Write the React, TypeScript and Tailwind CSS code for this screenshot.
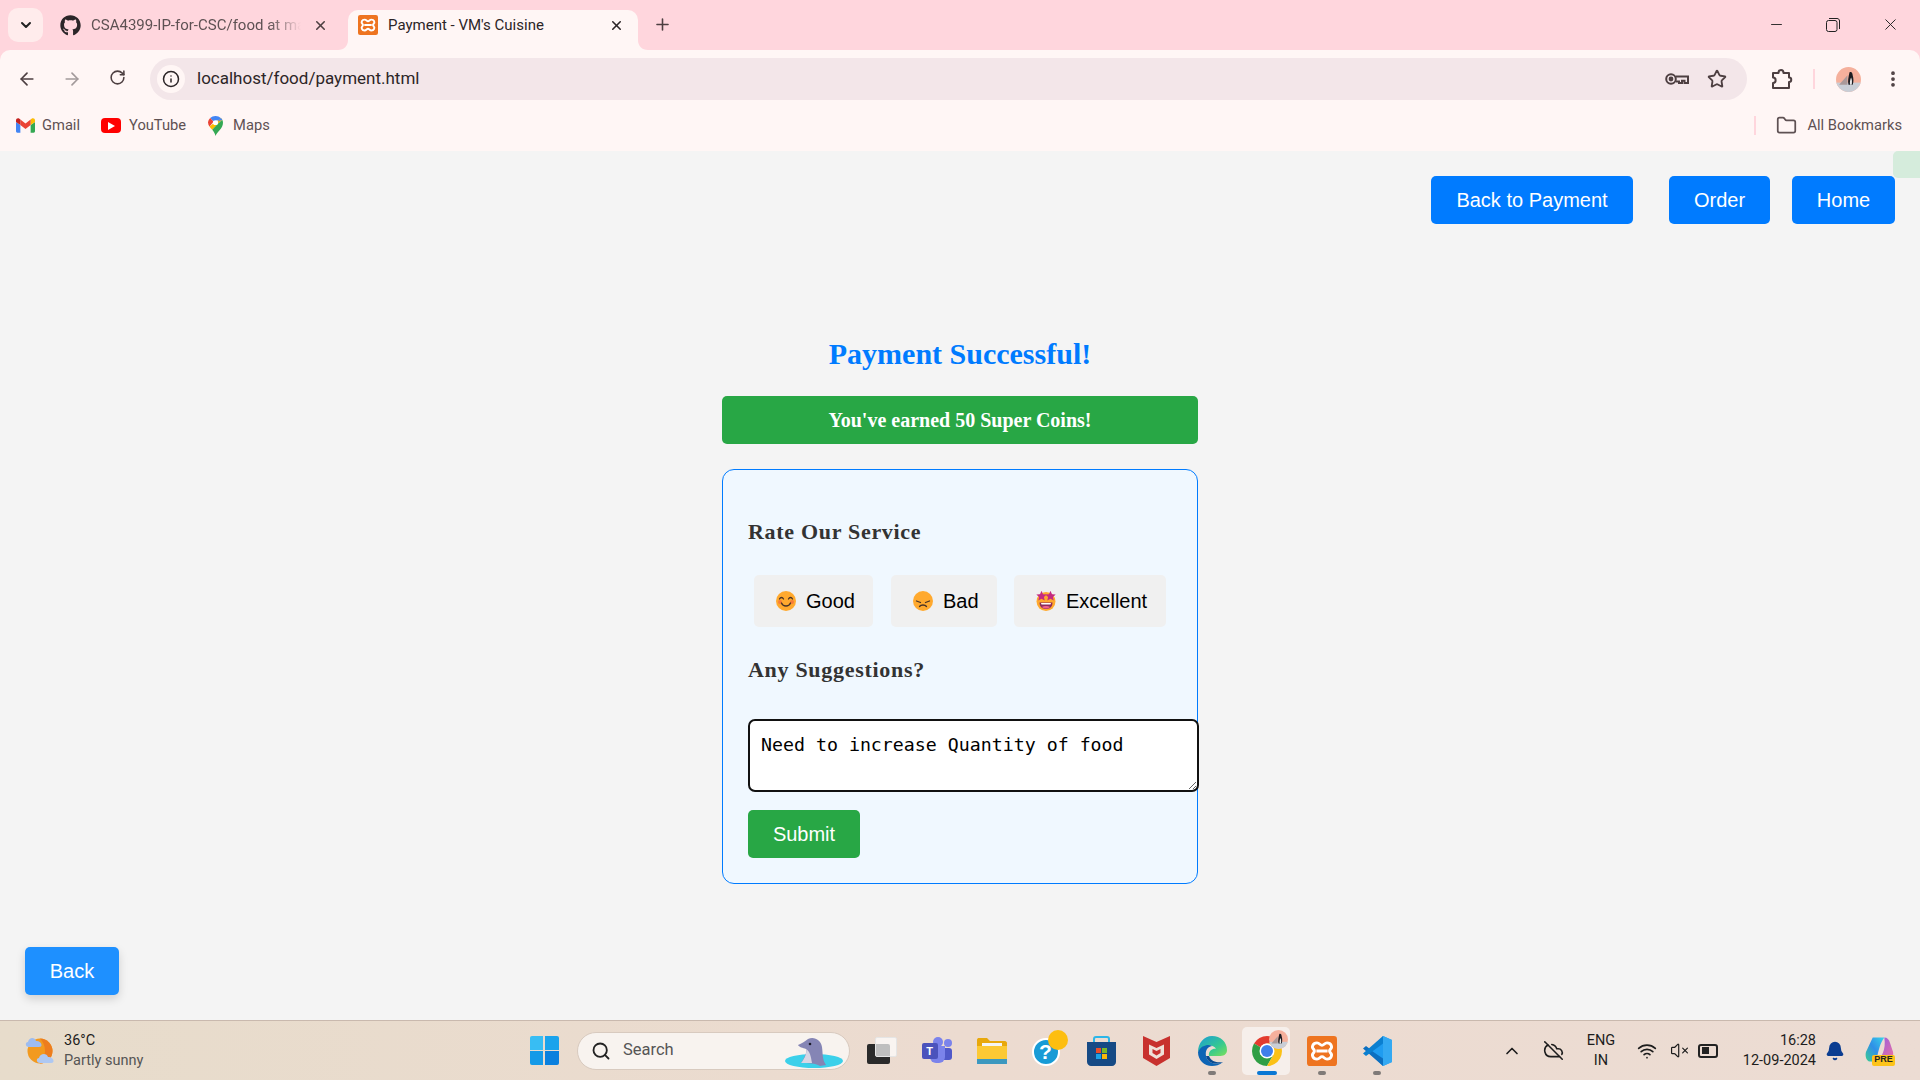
import {
  ArrowLeft,
  ArrowRight,
  Bell,
  ChevronDown,
  ChevronUp,
  CloudOff,
  Folder,
  Info,
  Minus,
  MoreVertical,
  Plus,
  RotateCw,
  Search,
  Star,
  VolumeX,
  Wifi,
  X,
} from "lucide-react";
import { FaGithub } from "react-icons/fa";
import type { ReactNode } from "react";

function Xampp({ size }: { size: number }) {
  return (
    <svg width={size} height={size} viewBox="0 0 24 24">
      <rect width="24" height="24" rx="2.500" fill="#ee7420" />
      <path
        d="M8 5.500C10 5.500 10.500 7.500 12 7.500S14 5.500 16 5.500C19.500 5.500 20.500 9 18.800 10.500 17.800 11.500 17.800 12.500 18.800 13.500 20.500 15 19.500 18.500 16 18.500 14 18.500 13.500 16.500 12 16.500S10 18.500 8 18.500C4.500 18.500 3.500 15 5.200 13.500 6.200 12.500 6.200 11.500 5.200 10.500 3.500 9 4.500 5.500 8 5.500ZM7.500 12H16.500"
        fill="none"
        stroke="#fff"
        strokeWidth="2.300"
      />
    </svg>
  );
}

function Avatar({ size }: { size: number }) {
  return (
    <svg width={size} height={size} viewBox="0 0 24 24">
      <defs>
        <clipPath id="avatar-clip">
          <circle cx="12" cy="12" r="12" />
        </clipPath>
      </defs>
      <g clipPath="url(#avatar-clip)">
        <rect width="24" height="24" fill="#f5b09c" />
        <rect y="15" width="24" height="9" fill="#c9ced6" />
        <path d="M3 17 11 8v9Z" fill="#a99" />
        <path d="M13 5c2-1 3 1 3 3 1 3 1 7 0 9h-4c-1-3 0-8 1-12Z" fill="#1d1d22" />
        <path d="M14.500 10c1 2 1 5 .5 7h-1.500c-.5-2 0-5 1-7Z" fill="#e9e9e9" />
      </g>
    </svg>
  );
}

function KeyIcon() {
  return (
    <svg width="24" height="14" viewBox="0 0 24 14" fill="none" stroke="#4d3f41" strokeWidth="2">
      <circle cx="6" cy="7" r="4.800" />
      <circle cx="6" cy="7" r="1.400" fill="#4d3f41" />
      <path d="M11 4.500H23V11H19.500V8.800H17V11H14V9.500H11" />
    </svg>
  );
}

function ExtensionIcon() {
  return (
    <svg width="22" height="22" viewBox="0 0 22 22" fill="none" stroke="#4d3f41" strokeWidth="2" strokeLinejoin="round">
      <path d="M2 5H7.500C7.500 1 12.500 1 12.500 5H18V9.500C21 9.500 21 14 18 14V20H2V15C5.500 15 5.500 9.500 2 9.500Z" />
    </svg>
  );
}

function GmailIcon() {
  return (
    <svg width="19" height="15" viewBox="0 0 24 18">
      <path d="M1.600 18H5.500V8.500L0 4.500V16.400C0 17.300.7 18 1.600 18Z" fill="#4285f4" />
      <path d="M18.500 18H22.400C23.300 18 24 17.300 24 16.400V4.500L18.500 8.500Z" fill="#34a853" />
      <path d="M18.500 1.500V8.500L24 4.500V2.300C24 .3 21.700-.9 20.100.3Z" fill="#fbbc04" />
      <path d="M5.500 8.500V1.500L12 6.400 18.500 1.500V8.500L12 13.400Z" fill="#ea4335" />
      <path d="M0 2.300V4.500L5.500 8.500V1.500L3.900.3C2.300-.9 0 .3 0 2.300Z" fill="#c5221f" />
    </svg>
  );
}

function YoutubeIcon() {
  return (
    <span className="flex h-[15px] w-[20px] items-center justify-center rounded-[4px] bg-[#f00]">
      <svg width="8" height="8" viewBox="0 0 8 8">
        <path d="M1 0 8 4 1 8Z" fill="#fff" />
      </svg>
    </span>
  );
}

function MapsIcon() {
  return (
    <svg width="15" height="20" viewBox="0 0 16 24" preserveAspectRatio="none">
      <path d="M1.500 12.500C2.500 14 3.500 15.200 4.500 16.500L15.200 4.500A8 8 0 0 0 13.700 2.300Z" fill="#fbbc04" />
      <path d="M10 10 4.500 16.500C6 18.500 7.300 20.500 8 24 9.500 19 16 15 16 8 16 6.800 15.700 5.500 15.200 4.500Z" fill="#34a853" />
      <path d="M8 0A8 8 0 0 0 2.300 2.300L6 7 12 4.500 13.700 2.300A8 8 0 0 0 8 0Z" fill="#4285f4" />
      <path d="M13.700 2.300 10 7 15.200 4.500A8 8 0 0 0 13.700 2.300Z" fill="#4285f4" />
      <path d="M2.300 2.300A8 8 0 0 0 1.500 12.500L6 7Z" fill="#ea4335" />
      <circle cx="8" cy="8" r="2.800" fill="#fff" />
    </svg>
  );
}

function SmileEmoji() {
  return (
    <svg width="20" height="20" viewBox="0 0 20 20">
      <circle cx="10" cy="10" r="10" fill="#ffa92e" />
      <circle cx="4" cy="11" r="2" fill="#f5703c" opacity=".8" />
      <circle cx="16" cy="11" r="2" fill="#f5703c" opacity=".8" />
      <path d="M3.500 8C4.500 6 6.500 6 7.500 8M12.500 8C13.500 6 15.500 6 16.500 8M5.500 12C7 16 13 16 14.500 12" fill="none" stroke="#4a3326" strokeWidth="1.300" strokeLinecap="round" />
    </svg>
  );
}

function SadEmoji() {
  return (
    <svg width="20" height="20" viewBox="0 0 20 20">
      <circle cx="10" cy="10" r="10" fill="#ffa92e" />
      <path d="M3.500 10 7.500 11.500M16.500 10 12.500 11.500M6.500 15.500C8 13.500 12 13.500 13.500 15.500" fill="none" stroke="#4a3326" strokeWidth="1.300" strokeLinecap="round" />
    </svg>
  );
}

function StarEmoji() {
  const star = "M0-4.500 1.300-1.500 4.500-1.200 2.100.9 2.800 4 0 2.400-2.800 4-2.100.9-4.500-1.200-1.300-1.500Z";
  return (
    <svg width="20" height="20" viewBox="0 0 20 20">
      <circle cx="10" cy="10.500" r="9.500" fill="#ffa92e" />
      <path d="M3.500 11.500H16.500C16.500 16 13.500 18 10 18S3.500 16 3.500 11.500Z" fill="#8e2a5c" />
      <path d="M5 12H15L14.500 13.500H5.500Z" fill="#fff" />
      <path d="M6 16C8 14.800 12 14.800 14 16 12 18 8 18 6 16Z" fill="#f0608a" />
      <path d={star} transform="translate(5.500 5) scale(1.150)" fill="#c42a82" />
      <path d={star} transform="translate(14.500 5) scale(1.150)" fill="#c42a82" />
    </svg>
  );
}

function WeatherIcon() {
  return (
    <svg width="32" height="30" viewBox="0 0 32 30">
      <circle cx="16" cy="15" r="12.500" fill="#f29a1f" />
      <path d="M16 2.500A12.500 12.500 0 0 1 16 27.500 18 18 0 0 0 16 2.500Z" fill="#ed7d1e" />
      <path d="M5 11C1 11 1 6 4 6 5 1 11 1 12 5 17 4 20 11 15 11Z" fill="#9dbcf0" />
      <path d="M16 27C12 27 12 22 15 22 16 17 23 17 24 21 29 20 32 27 27 27Z" fill="#aec8f2" />
    </svg>
  );
}

function WindowsLogo() {
  return (
    <div className="grid h-[29px] w-[29px] grid-cols-2 gap-[1.500px]">
      <span className="rounded-tl-[2px] bg-[#38bdf3]" />
      <span className="rounded-tr-[2px] bg-[#1aa3ec]" />
      <span className="rounded-bl-[2px] bg-[#159ae8]" />
      <span className="rounded-br-[2px] bg-[#0a80de]" />
    </div>
  );
}

function Dolphin() {
  return (
    <svg width="60" height="32" viewBox="0 0 60 32" className="absolute right-[5px] bottom-0">
      <ellipse cx="30" cy="24" rx="29" ry="7" fill="#3cd0ea" />
      <path d="M17 26C21 20 23 16 22 12 19 11 15 10 14 8 18 6 20 5 24 2 30-1 37 3 38 10 39 17 38 22 42 28L36 29C31 26 24 26 17 26Z" fill="#8585b5" />
      <path d="M22 12C26 14 27 20 28 26 24 26 20 26 17 26 21 21 23 16 22 12Z" fill="#d8d6e4" />
      <circle cx="26" cy="7" r="1.300" fill="#1b1b2a" />
    </svg>
  );
}

function TaskView() {
  return (
    <div className="relative h-[27px] w-[30px]">
      <span className="absolute bottom-0 left-0 h-[20px] w-[23px] rounded-[2px] bg-[#2a2a2a]" />
      <span className="absolute top-0 right-0 h-[20px] w-[22px] rounded-[2px] border border-[#e5e5e5] bg-white/70" />
    </div>
  );
}

function TeamsIcon() {
  return (
    <div className="relative h-[27px] w-[30px]">
      <span className="absolute top-[2px] right-0 h-[8px] w-[8px] rounded-full bg-[#7b83eb]" />
      <span className="absolute top-[11px] right-0 h-[12px] w-[11px] rounded-[3px] bg-[#5059c9]" />
      <span className="absolute top-0 left-[11px] h-[10px] w-[10px] rounded-full bg-[#7b83eb]" />
      <span className="absolute top-[9px] left-[8px] h-[17px] w-[15px] rounded-b-[6px] bg-[#7b83eb]" />
      <span className="absolute top-[6px] left-0 flex h-[16px] w-[16px] items-center justify-center rounded-[2px] bg-[#4b53bc] font-['Liberation_Sans',sans-serif] text-[11px] font-bold text-white">
        T
      </span>
    </div>
  );
}

function FilesIcon() {
  return (
    <svg width="30" height="28" viewBox="0 0 30 28">
      <path d="M0 3C0 1.500 1 1 2 1H10L13 4H28C29 4 30 5 30 6V10H0Z" fill="#e8a80c" />
      <rect x="5" y="6" width="20" height="5" fill="#f4f4f4" />
      <path d="M0 9H30V25C30 26.500 29 27 28 27H2C1 27 0 26.500 0 25Z" fill="#fcc934" />
      <rect x="0" y="22" width="30" height="5" fill="#1a8fd8" opacity=".85" />
    </svg>
  );
}

function HelpIcon() {
  return (
    <div className="relative mb-[6px] ml-[6px] h-[36px] w-[36px]">
      <span className="absolute bottom-0 left-0 flex h-[28px] w-[28px] items-center justify-center rounded-full border-2 border-white bg-[#189bd6] font-['Liberation_Sans',sans-serif] text-[21px] font-bold text-white">
        ?
      </span>
      <span className="absolute top-0 right-0 h-[20px] w-[20px] rounded-full bg-[#fdbe10]" />
    </div>
  );
}

function StoreIcon() {
  return (
    <svg width="29" height="30" viewBox="0 0 29 30">
      <path d="M7 7V3C7 2 8 1 9 1H20C21 1 22 2 22 3V7" fill="none" stroke="#2cb6e8" strokeWidth="2" />
      <path d="M0 6H29V26C29 28 27 30 25 30H4C2 30 0 28 0 26Z" fill="#164a85" />
      <rect x="9" y="12" width="5" height="5" fill="#ea4d2a" />
      <rect x="15" y="12" width="5" height="5" fill="#7bb928" />
      <rect x="9" y="18" width="5" height="5" fill="#1ba3e6" />
      <rect x="15" y="18" width="5" height="5" fill="#fcb70a" />
    </svg>
  );
}

function McafeeIcon() {
  return (
    <svg width="27" height="30" viewBox="0 0 27 30">
      <path d="M0 0 13.500 6 27 0V22L13.500 30 0 22Z" fill="#c8312e" />
      <path d="M6 8.500 13.500 12 21 8.500V18.500L13.500 23 6 18.500Z" fill="#efe0d8" />
      <path d="M9.500 13 13.500 15 17.500 13V17L13.500 19.500 9.500 17Z" fill="#c8312e" />
    </svg>
  );
}

function EdgeIcon() {
  return (
    <svg width="30" height="30" viewBox="0 0 30 30">
      <defs>
        <linearGradient id="edge-top" x1="0" y1="0" x2="1" y2="1">
          <stop offset="0" stopColor="#1a9bd8" />
          <stop offset=".6" stopColor="#36c98f" />
          <stop offset="1" stopColor="#7be05a" />
        </linearGradient>
      </defs>
      <path d="M15 0C23.500 0 30 6 30 14 30 19 26 20 22 20H12C11 14 17 12 19 13 17 8 6 8 1 16 1 7 7 0 15 0Z" fill="url(#edge-top)" />
      <path d="M1 16C4 9 12 8 15 10 10 11 8 15 9 20 10 26 17 30 26 26 22 29 19 30 15 30 7 30 1 24 1 16Z" fill="#0c64b5" />
      <path d="M9 20C10 26 17 30 26 26 21 27 14 26 12 20Z" fill="#0a4b91" />
    </svg>
  );
}

function ChromeIcon() {
  return (
    <svg width="30" height="30" viewBox="2 2 20 20">
      <path d="M3.340 7A10 10 0 0 1 20.660 7H12A5 5 0 0 0 7.670 9.500Z" fill="#e33b2e" />
      <path d="M3.340 7A10 10 0 0 0 12 22L16.330 14.500 7.670 14.500 7.670 9.500Z" fill="#2f9e44" />
      <path d="M20.660 7A10 10 0 0 1 12 22L16.330 14.500 12 7Z" fill="#fbc116" />
      <circle cx="12" cy="12" r="5" fill="#fff" />
      <circle cx="12" cy="12" r="4" fill="#3f7fea" />
    </svg>
  );
}

function VscodeIcon() {
  return (
    <svg width="30" height="30" viewBox="0 0 30 30">
      <path d="M21 0 30 4V26L21 30 7 16.500Z" fill="#1f9cf0" />
      <path d="M21 0 21 30 30 26V4Z" fill="#34a9f2" />
      <path d="M21 7.500 10 15 21 22.500V30L1 12.500 4 10 10 14.500Z" fill="#0c6fc0" />
      <path d="M1 17.500 21 0V7.500L4 20Z" fill="#0a7fd0" />
    </svg>
  );
}

function CopilotIcon() {
  return (
    <div className="relative h-[30px] w-[30px]">
      <svg width="29" height="27" viewBox="0 0 30 27" className="absolute top-0 left-0">
        <defs>
          <linearGradient id="copilot-a" x1="0" y1="1" x2="1" y2="0">
            <stop offset="0" stopColor="#3bcf8e" />
            <stop offset=".5" stopColor="#2f8fe8" />
            <stop offset="1" stopColor="#38d5e8" />
          </linearGradient>
          <linearGradient id="copilot-b" x1="0" y1="0" x2="1" y2="1">
            <stop offset="0" stopColor="#8b5fe8" />
            <stop offset="1" stopColor="#f06fa0" />
          </linearGradient>
        </defs>
        <path d="M8 1H20C16 6 14 14 12 24 10 27 7 26 5 26 1 25 0 20 1 16Z" fill="url(#copilot-a)" />
        <path d="M20 1C23 1 25 3 26 7L29 16C30 21 27 25 22 25H12C17 22 22 14 20 1Z" fill="url(#copilot-b)" />
      </svg>
      <span className="absolute right-0 bottom-0 flex h-[11px] w-[23px] items-center justify-center rounded-[2px] bg-[#fdc31a] font-['Liberation_Sans',sans-serif] text-[9px] font-bold text-[#222]">
        PRE
      </span>
    </div>
  );
}

function TaskSlot({
  active,
  running,
  children,
}: {
  active?: boolean;
  running?: boolean;
  children: ReactNode;
}) {
  return (
    <div className="relative flex h-[60px] w-[55px] items-center justify-center">
      {active && (
        <span className="absolute top-[6px] left-[3px] h-[48px] w-[48px] rounded-[5px] bg-[#f6efeb]" />
      )}
      <span className="relative flex items-center justify-center">{children}</span>
      {running && (
        <span className="absolute bottom-[6px] h-[4px] w-[8px] rounded-full bg-[#7f7a78]" />
      )}
      {active && (
        <span className="absolute bottom-[6px] h-[4px] w-[20px] rounded-full bg-[#0a78d4]" />
      )}
    </div>
  );
}

function TabFlare({ side }: { side: "left" | "right" }) {
  return (
    <svg
      width="10"
      height="10"
      viewBox="0 0 10 10"
      className={side === "left" ? "absolute bottom-0 -left-[10px]" : "absolute -right-[10px] bottom-0"}
    >
      <path d={side === "left" ? "M10 0V10H0C6 10 10 6 10 0Z" : "M0 0V10H10C4 10 0 6 0 0Z"} fill="#fff6f5" />
    </svg>
  );
}

function BrowserChrome() {
  return (
    <header className="bg-[#ffd6dd] font-['Roboto',sans-serif] text-[#4d3f41]">
      <div className="flex h-[50px] items-end pl-[8px]">
        <div className="mb-[8px] flex h-[34px] w-[35px] items-center justify-center rounded-[10px] bg-[#ffecec] text-[#222]">
          <ChevronDown size={16} strokeWidth={3} />
        </div>
        <div className="mb-[8px] ml-[17px] flex h-[34px] w-[286px] items-center">
          <FaGithub size={21} color="#2b2528" />
          <span className="ml-[10px] w-[210px] text-[15px] whitespace-nowrap text-[#5e5153] [mask-image:linear-gradient(to_right,black_85%,transparent)]">
            CSA4399-IP-for-CSC/food at ma
          </span>
          <X size={15} strokeWidth={2.500} className="ml-[12px] text-[#4d3f41]" />
        </div>
        <div className="relative ml-[2px] flex h-[40px] w-[290px] items-center rounded-t-[10px] bg-[#fff6f5] pb-[10px] pl-[10px]">
          <TabFlare side="left" />
          <TabFlare side="right" />
          <Xampp size={20} />
          <span className="ml-[10px] text-[15px] whitespace-nowrap text-[#2c2527]">
            Payment - VM's Cuisine
          </span>
          <X size={15} strokeWidth={2.500} className="absolute right-[14px] text-[#2c2527]" />
        </div>
        <Plus size={19} strokeWidth={2} className="mb-[16px] ml-[15px] text-[#4d3f41]" />
        <div className="mb-[16px] ml-auto flex items-center pr-[20px] text-[#222]">
          <Minus size={17} strokeWidth={1.300} />
          <svg width="14" height="14" viewBox="0 0 14 14" className="ml-[41px]">
            <rect x=".5" y="2.500" width="10.500" height="11" rx="2" fill="none" stroke="#222" />
            <path d="M3 .5H11C12.500.5 13.500 1.500 13.500 3V11" fill="none" stroke="#222" />
          </svg>
          <X size={19} strokeWidth={1.200} className="ml-[41px]" />
        </div>
      </div>

      <div className="rounded-t-[10px] bg-[#fff6f5]">
        <div className="flex h-[58px] items-center pl-[9px]">
          <div className="flex gap-[9px]">
            <span className="flex w-[36px] justify-center">
              <ArrowLeft size={20} strokeWidth={2} />
            </span>
            <span className="flex w-[36px] justify-center text-[#a39a9b]">
              <ArrowRight size={20} strokeWidth={2} />
            </span>
            <span className="flex w-[36px] justify-center">
              <RotateCw size={17} strokeWidth={2.200} />
            </span>
          </div>
          <div className="ml-[15px] flex h-[42px] flex-1 items-center rounded-full bg-[#f3e6e9] pl-[7px]">
            <span className="flex h-[28px] w-[28px] items-center justify-center rounded-full bg-[#fff6f5] text-[#2c2527]">
              <Info size={18} strokeWidth={2} />
            </span>
            <span className="ml-[12px] text-[17px] text-[#2c2527]">localhost/food/payment.html</span>
            <span className="ml-auto">
              <KeyIcon />
            </span>
            <Star size={20} strokeWidth={2.200} className="mr-[20px] ml-[18px]" />
          </div>
          <div className="flex w-[173px] shrink-0 items-center">
            <span className="ml-[24px]">
              <ExtensionIcon />
            </span>
            <span className="ml-[20px] h-[20px] w-[2px] bg-[#ffd6dd]" />
            <span className="ml-[21px]">
              <Avatar size={25} />
            </span>
            <MoreVertical size={20} strokeWidth={2.500} className="ml-[22px]" />
          </div>
        </div>
        <div className="flex h-[43px] items-center pb-[8px] pl-[16px] text-[14.700px] text-[#5e5153]">
          <GmailIcon />
          <span className="ml-[7px]">Gmail</span>
          <span className="ml-[21px]">
            <YoutubeIcon />
          </span>
          <span className="ml-[8px]">YouTube</span>
          <span className="ml-[22px]">
            <MapsIcon />
          </span>
          <span className="ml-[10px]">Maps</span>
          <div className="ml-auto flex items-center pr-[18px]">
            <span className="h-[19px] w-[2px] bg-[#ffd6dd]" />
            <Folder size={21} strokeWidth={2} className="ml-[20px]" />
            <span className="ml-[10px]">All Bookmarks</span>
          </div>
        </div>
      </div>
    </header>
  );
}

function RatingButton({ icon, label, className }: { icon: ReactNode; label: string; className: string }) {
  return (
    <button
      className={`flex h-[52px] items-center gap-[10px] rounded-[5px] bg-[#f0f0f0] pl-[22px] text-[20px] text-black ${className}`}
    >
      {icon}
      {label}
    </button>
  );
}

function PaymentPage() {
  return (
    <main className="relative flex flex-1 flex-col bg-[#f4f4f4] font-['Liberation_Sans',sans-serif]">
      <span className="absolute top-0 right-0 h-[27px] w-[27px] rounded-l-[5px] bg-[#d5ecdc]" />
      <nav className="flex justify-end pt-[25px] pr-[25px] text-[20px] text-white">
        <a className="flex h-[48px] w-[202px] items-center justify-center rounded-[5px] bg-[#007bff]">Back to Payment</a>
        <a className="ml-[36px] flex h-[48px] w-[101px] items-center justify-center rounded-[5px] bg-[#007bff]">Order</a>
        <a className="ml-[22px] flex h-[48px] w-[103px] items-center justify-center rounded-[5px] bg-[#007bff]">Home</a>
      </nav>

      <section className="mx-auto mt-[108px] flex w-[476px] flex-col font-['Liberation_Serif',serif]">
        <h1 className="text-center text-[30px] leading-[44px] font-bold text-[#007bff]">Payment Successful!</h1>
        <p className="mt-[20px] flex h-[48px] items-center justify-center rounded-[5px] bg-[#28a745] text-[20px] font-bold text-white">
          You've earned 50 Super Coins!
        </p>
        <div className="mt-[25px] h-[415px] rounded-[12px] border border-[#007bff] bg-[#f0f8ff] pt-[42px] pl-[25px]">
          <h2 className="text-[22px] leading-[40px] font-bold tracking-[0.7px] text-[#333]">Rate Our Service</h2>
          <div className="mt-[23px] flex pl-[6px] font-['Liberation_Sans',sans-serif]">
            <RatingButton icon={<SmileEmoji />} label="Good" className="w-[119px]" />
            <RatingButton icon={<SadEmoji />} label="Bad" className="ml-[18px] w-[106px]" />
            <RatingButton icon={<StarEmoji />} label="Excellent" className="ml-[17px] w-[152px]" />
          </div>
          <h2 className="mt-[23px] text-[22px] leading-[40px] font-bold tracking-[0.7px] text-[#333]">Any Suggestions?</h2>
          <textarea
            defaultValue="Need to increase Quantity of food"
            className="mt-[29px] block h-[73px] w-[451px] rounded-[7px] border-2 border-[#111] bg-white py-[12px] pr-[12px] pl-[11px] font-['DejaVu_Sans_Mono',monospace] text-[18.250px] leading-[24px] text-black outline-none"
          />
          <button className="mt-[18px] flex h-[48px] w-[112px] items-center justify-center rounded-[5px] bg-[#28a745] font-['Liberation_Sans',sans-serif] text-[20px] text-white">
            Submit
          </button>
        </div>
      </section>

      <a className="mt-auto mb-[25px] ml-[25px] flex h-[48px] w-[94px] items-center justify-center rounded-[5px] bg-[#1e90ff] text-[20px] text-white shadow-[0_4px_10px_rgba(0,0,0,0.15)]">
        Back
      </a>
    </main>
  );
}

function Taskbar() {
  return (
    <footer className="flex h-[60px] items-center border-t border-[#c9b9ae] bg-gradient-to-r from-[#e7dccb] via-[#ecdbd0] to-[#ecdcd3] font-['Roboto',sans-serif] text-[#1d1d1d]">
      <div className="flex w-[518px] items-center pl-[24px]">
        <WeatherIcon />
        <div className="ml-[8px] text-[14.500px] leading-[20px]">
          <div>36°C</div>
          <div className="text-[#555]">Partly sunny</div>
        </div>
      </div>
      <div className="flex w-[52px] justify-center">
        <WindowsLogo />
      </div>
      <div className="relative ml-[7px] flex h-[38px] w-[273px] items-center rounded-full border border-[#d8cabf] bg-[#f8f3ef] pl-[13px] text-[16.500px] text-[#555]">
        <Search size={20} strokeWidth={2.200} className="text-[#222]" />
        <span className="ml-[12px]">Search</span>
        <Dolphin />
      </div>
      <div className="ml-[4px] flex">
        <TaskSlot>
          <TaskView />
        </TaskSlot>
        <TaskSlot>
          <TeamsIcon />
        </TaskSlot>
        <TaskSlot>
          <FilesIcon />
        </TaskSlot>
        <TaskSlot>
          <HelpIcon />
        </TaskSlot>
        <TaskSlot>
          <StoreIcon />
        </TaskSlot>
        <TaskSlot>
          <McafeeIcon />
        </TaskSlot>
        <TaskSlot running>
          <EdgeIcon />
        </TaskSlot>
        <TaskSlot active>
          <ChromeIcon />
          <span className="absolute -top-[6px] -right-[6px]">
            <Avatar size={19} />
          </span>
        </TaskSlot>
        <TaskSlot running>
          <Xampp size={30} />
        </TaskSlot>
        <TaskSlot running>
          <VscodeIcon />
        </TaskSlot>
      </div>
      <div className="ml-auto flex items-center pr-[20px] text-[14px]">
        <span className="flex w-[40px] justify-center">
          <ChevronUp size={20} strokeWidth={2} />
        </span>
        <span className="flex w-[42px] justify-center">
          <CloudOff size={21} strokeWidth={1.800} />
        </span>
        <div className="flex w-[54px] flex-col items-center text-[14.500px] leading-[20px]">
          <span>ENG</span>
          <span>IN</span>
        </div>
        <span className="flex w-[37px] justify-center">
          <Wifi size={20} strokeWidth={2} />
        </span>
        <span className="flex w-[28px] justify-center">
          <VolumeX size={19} strokeWidth={1.500} />
        </span>
        <span className="flex w-[30px] justify-center">
          <span className="flex h-[14px] w-[20px] items-center rounded-[3px] border-2 border-[#222] pl-[2px]">
            <span className="h-[7px] w-[7px] bg-[#222]" />
          </span>
        </span>
        <div className="flex w-[93px] flex-col items-end text-[14.500px] leading-[20px]">
          <span>16:28</span>
          <span>12-09-2024</span>
        </div>
        <span className="flex w-[38px] justify-center">
          <Bell size={20} fill="#0b3d91" color="#0b3d91" />
        </span>
        <span className="ml-[6px] flex w-[40px] justify-center">
          <CopilotIcon />
        </span>
      </div>
    </footer>
  );
}

export default function App() {
  return (
    <div className="flex h-screen w-full flex-col overflow-hidden">
      <BrowserChrome />
      <PaymentPage />
      <Taskbar />
    </div>
  );
}
